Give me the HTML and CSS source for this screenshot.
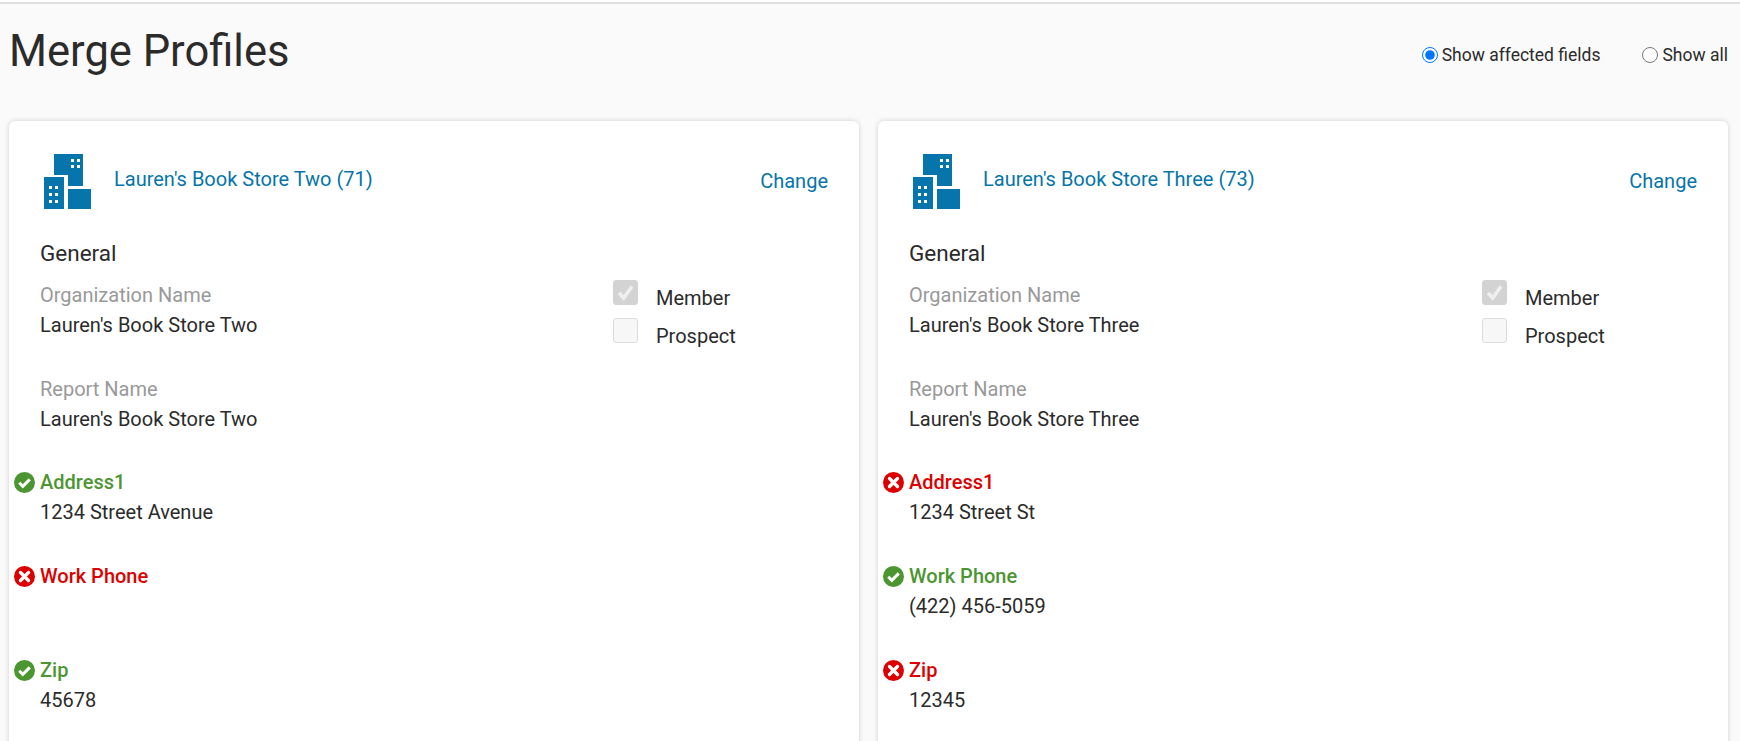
FILE: index.html
```html
<!DOCTYPE html>
<html lang="en">
<head>
<meta charset="utf-8">
<title>Merge Profiles</title>
<link rel="stylesheet" href="styles.css">
</head>
<body>
<svg class="defs" width="0" height="0" aria-hidden="true">
  <defs>
    <symbol id="org" viewBox="0 0 47 55">
      <path fill="#0675ab" d="M10 0h29v32H24V21H10z"/>
      <path fill="#0675ab" d="M0 23h20v32H0z"/>
      <path fill="#0675ab" d="M24 35h23v20H24z"/>
      <g fill="#fff">
        <path d="M27 5h3v3h-3zM33 5h3v3h-3zM27 11h3v3h-3zM33 11h3v3h-3z"/>
        <path d="M5 32h3v3H5zM11 32h3v3h-3zM5 39h3v3H5zM11 39h3v3h-3zM5 46h3v3H5zM11 46h3v3h-3z"/>
      </g>
    </symbol>
    <symbol id="ok" viewBox="0 0 20 20">
      <circle cx="10" cy="10" r="10" fill="#4c9632"/>
      <path d="M5 10.3l3.4 3.4L15 7" fill="none" stroke="#fff" stroke-width="2.8"/>
    </symbol>
    <symbol id="bad" viewBox="0 0 20 20">
      <circle cx="10" cy="10" r="10" fill="#dd0000"/>
      <path d="M6.2 6.2l7.6 7.6M13.8 6.2l-7.6 7.6" fill="none" stroke="#fff" stroke-width="3.2" stroke-linecap="round"/>
    </symbol>
  </defs>
</svg>
<header class="page-head">
  <h1>Merge Profiles</h1>
  <form class="filter">
    <label class="radio"><input type="radio" name="show" checked>Show affected fields</label>
    <label class="radio"><input type="radio" name="show">Show all</label>
  </form>
</header>
<main class="cards">
  <section class="card">
    <div class="card-head">
      <svg class="org-icon"><use href="#org"/></svg>
      <a class="org-name" href="#">Lauren's Book Store Two (71)</a>
      <a class="change" href="#">Change</a>
    </div>
    <h2>General</h2>
    <div class="general">
      <div class="names">
        <div class="field"><div class="label">Organization Name</div><div class="value">Lauren's Book Store Two</div></div>
        <div class="field"><div class="label">Report Name</div><div class="value">Lauren's Book Store Two</div></div>
      </div>
      <div class="checks">
        <div class="check"><span class="box on"><svg viewBox="0 0 25 25"><path d="M5.5 13l5 5.5L19.5 6" fill="none" stroke="#efefef" stroke-width="4"/></svg></span>Member</div>
        <div class="check"><span class="box"></span>Prospect</div>
      </div>
    </div>
    <div class="field"><div class="label good"><svg class="mark"><use href="#ok"/></svg>Address1</div><div class="value">1234 Street Avenue</div></div>
    <div class="field"><div class="label wrong"><svg class="mark"><use href="#bad"/></svg>Work Phone</div><div class="value"></div></div>
    <div class="field"><div class="label good"><svg class="mark"><use href="#ok"/></svg>Zip</div><div class="value">45678</div></div>
  </section>
  <section class="card">
    <div class="card-head">
      <svg class="org-icon"><use href="#org"/></svg>
      <a class="org-name" href="#">Lauren's Book Store Three (73)</a>
      <a class="change" href="#">Change</a>
    </div>
    <h2>General</h2>
    <div class="general">
      <div class="names">
        <div class="field"><div class="label">Organization Name</div><div class="value">Lauren's Book Store Three</div></div>
        <div class="field"><div class="label">Report Name</div><div class="value">Lauren's Book Store Three</div></div>
      </div>
      <div class="checks">
        <div class="check"><span class="box on"><svg viewBox="0 0 25 25"><path d="M5.5 13l5 5.5L19.5 6" fill="none" stroke="#efefef" stroke-width="4"/></svg></span>Member</div>
        <div class="check"><span class="box"></span>Prospect</div>
      </div>
    </div>
    <div class="field"><div class="label wrong"><svg class="mark"><use href="#bad"/></svg>Address1</div><div class="value">1234 Street St</div></div>
    <div class="field"><div class="label good"><svg class="mark"><use href="#ok"/></svg>Work Phone</div><div class="value">(422) 456-5059</div></div>
    <div class="field"><div class="label wrong"><svg class="mark"><use href="#bad"/></svg>Zip</div><div class="value">12345</div></div>
  </section>
</main>
</body>
</html>
```
FILE: styles.css
```css
* { box-sizing: border-box; }
html, body { height: 100%; }
body {
  margin: 0;
  overflow: hidden;
  background: #fafafa;
  color: #2b2b2b;
  font-family: Roboto, "Liberation Sans", sans-serif;
  font-size: 20px;
  border-top: 2px solid #fff;
}
.defs { display: block; height: 0; }
.page-head {
  height: 119px;
  border-top: 2px solid #e0e0e0;
  padding: 0 12px 0 9px;
  display: flex;
  justify-content: space-between;
  align-items: flex-start;
}
h1 {
  margin: 23px 0 0;
  font-size: 43.5px;
  line-height: 50px;
  font-weight: 400;
}
.filter { display: flex; gap: 42px; margin-top: 39px; }
.radio {
  display: flex;
  align-items: center;
  gap: 4px;
  font-size: 17.5px;
  line-height: 24px;
}
.radio input { margin: 0; width: 16px; height: 16px; }
.cards {
  display: grid;
  grid-template-columns: 850px 850px;
  gap: 19px;
  padding-left: 9px;
}
.card {
  background: #fff;
  border-radius: 6px;
  box-shadow: 0 0 5px rgba(0,0,0,.18);
  padding: 33px 31px 0;
  height: 700px;
}
.card-head { display: flex; align-items: center; height: 55px; padding-left: 4px; }
.org-icon { width: 47px; height: 55px; flex: none; }
.org-name { margin-left: 23px; margin-top: -6px; }
.change { margin-left: auto; margin-top: -2px; }
a { color: #0675ab; text-decoration: none; }
h2 {
  margin: 30px 0 13px;
  font-size: 22.5px;
  line-height: 28px;
  font-weight: 400;
}
.general { display: flex; margin-bottom: -1px; }
.names { width: 573px; }
.field { height: 94px; }
.label { display: flex; align-items: center; height: 30px; color: #999; }
.value { height: 30px; line-height: 30px; }
.label.good { color: #4c9632; font-weight: 500; }
.label.wrong { color: #dd0000; font-weight: 500; }
.mark { width: 21px; height: 21px; margin-left: -26px; margin-right: 5px; flex: none; }
.checks { display: flex; flex-direction: column; gap: 13px; }
.check { display: flex; align-items: flex-start; gap: 18px; height: 25px; line-height: 36px; }
.box {
  width: 25px;
  height: 25px;
  flex: none;
  border-radius: 3px;
  background: #f7f7f7;
  border: 1px solid #dcdcdc;
}
.box.on { background: #d3d3d3; border-color: #d3d3d3; }
.box svg { display: block; width: 23px; height: 23px; }
```
